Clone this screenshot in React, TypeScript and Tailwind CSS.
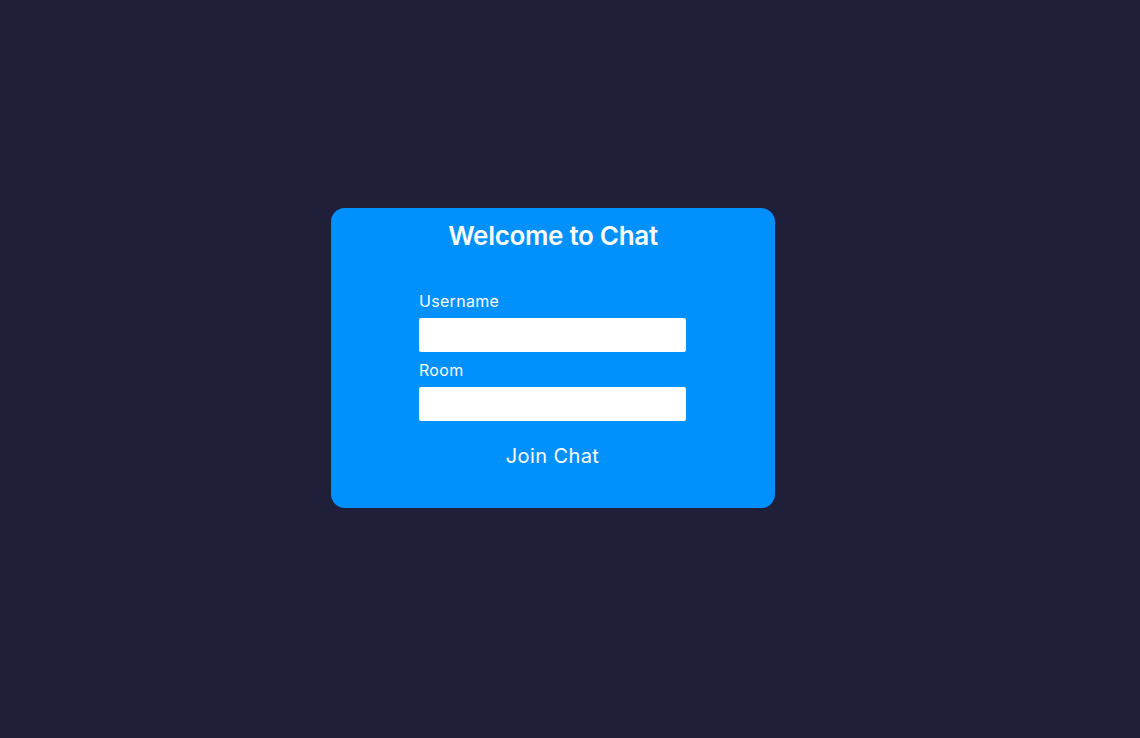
export default function App() {
  return (
    <div
      className="min-h-[738px] w-full bg-[#201f3a] pl-[331px] pt-[208px]"
      style={{ fontFamily: "Inter, 'Open Sans', sans-serif" }}
    >
      <div className="flex h-[300px] w-[444px] flex-col items-center rounded-[14px] bg-[#0091ff] text-white">
        <h1 className="mt-[6px] text-[26px] font-semibold leading-[44px] tracking-[-0.3px]">Welcome to Chat</h1>
        <form className="mr-[1px] mt-[33px] flex w-[267px] flex-col" onSubmit={(e) => e.preventDefault()}>
          <label className="text-[16px] font-normal leading-[20px] tracking-[0.3px]">Username</label>
          <input className="mt-[7px] h-[34px] rounded-[2px] bg-white px-2 text-black outline-none" />
          <label className="mt-[8px] text-[16px] font-normal leading-[20px] tracking-[0.3px]">Room</label>
          <input className="mt-[7px] h-[34px] rounded-[2px] bg-white px-2 text-black outline-none" />
          <button type="submit" className="mt-[21px] text-[20px] font-normal leading-[28px] tracking-[0.4px] text-white">
            Join Chat
          </button>
        </form>
      </div>
    </div>
  );
}
